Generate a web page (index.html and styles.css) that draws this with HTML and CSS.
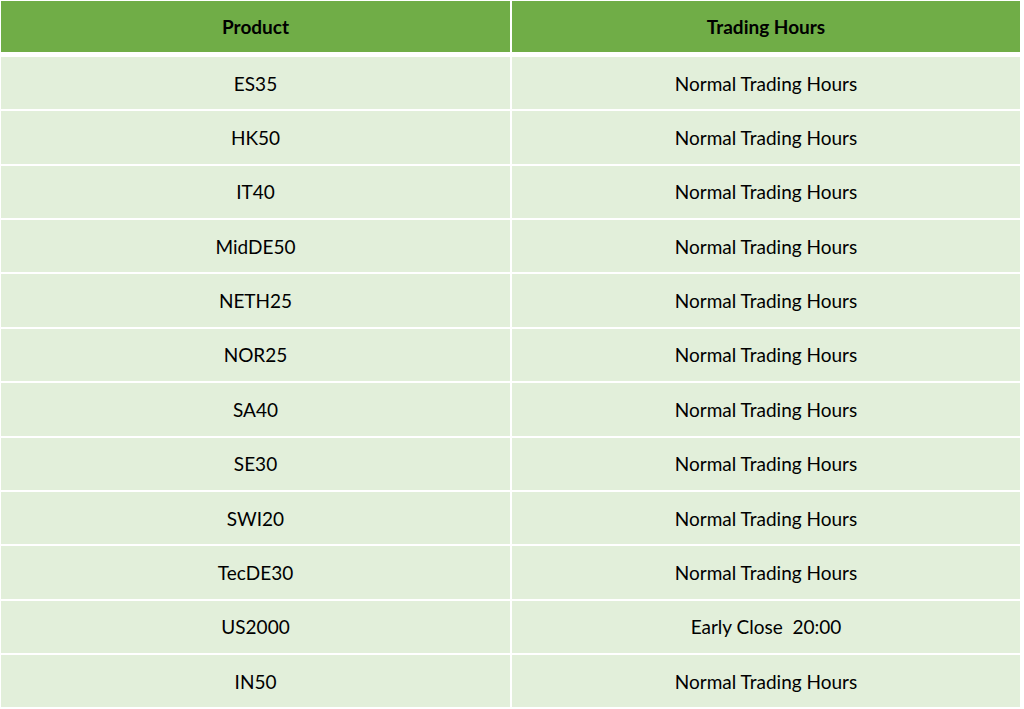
FILE: index.html
```html
<!DOCTYPE html>
<html>
<head>
<meta charset="utf-8">
<link rel="stylesheet" href="styles.css">
</head>
<body>
<div class="wrap">
  <div class="grid">
    <div class="cell head">Product</div>
    <div class="cell head">Trading Hours</div>
    <div class="sep"></div>
    <div class="cell">ES35</div><div class="cell">Normal Trading Hours</div>
    <div class="cell">HK50</div><div class="cell">Normal Trading Hours</div>
    <div class="cell">IT40</div><div class="cell">Normal Trading Hours</div>
    <div class="cell">MidDE50</div><div class="cell">Normal Trading Hours</div>
    <div class="cell">NETH25</div><div class="cell">Normal Trading Hours</div>
    <div class="cell">NOR25</div><div class="cell">Normal Trading Hours</div>
    <div class="cell">SA40</div><div class="cell">Normal Trading Hours</div>
    <div class="cell">SE30</div><div class="cell">Normal Trading Hours</div>
    <div class="cell">SWI20</div><div class="cell">Normal Trading Hours</div>
    <div class="cell">TecDE30</div><div class="cell">Normal Trading Hours</div>
    <div class="cell">US2000</div><div class="cell">Early Close&nbsp;&nbsp;20:00</div>
    <div class="cell">IN50</div><div class="cell">Normal Trading Hours</div>
  </div>
</div>
</body>
</html>
```

FILE: styles.css
```css
html, body {
  margin: 0;
  padding: 0;
  background: #ffffff;
}
.wrap {
  padding: 1px 4px 0 1px;
}
.grid {
  display: grid;
  grid-template-columns: 509px 508px;
  grid-template-rows: 51px 1px repeat(12, 52.36px);
  column-gap: 2px;
  row-gap: 2px;
  font-family: Lato, "Open Sans", sans-serif;
  font-size: 19px;
  color: #000;
}
.sep {
  grid-column: 1 / 3;
  height: 0;
}
.cell {
  background: #e2efda;
  display: flex;
  align-items: center;
  justify-content: center;
}
.head {
  background: #70ad47;
  font-weight: bold;
}
```
